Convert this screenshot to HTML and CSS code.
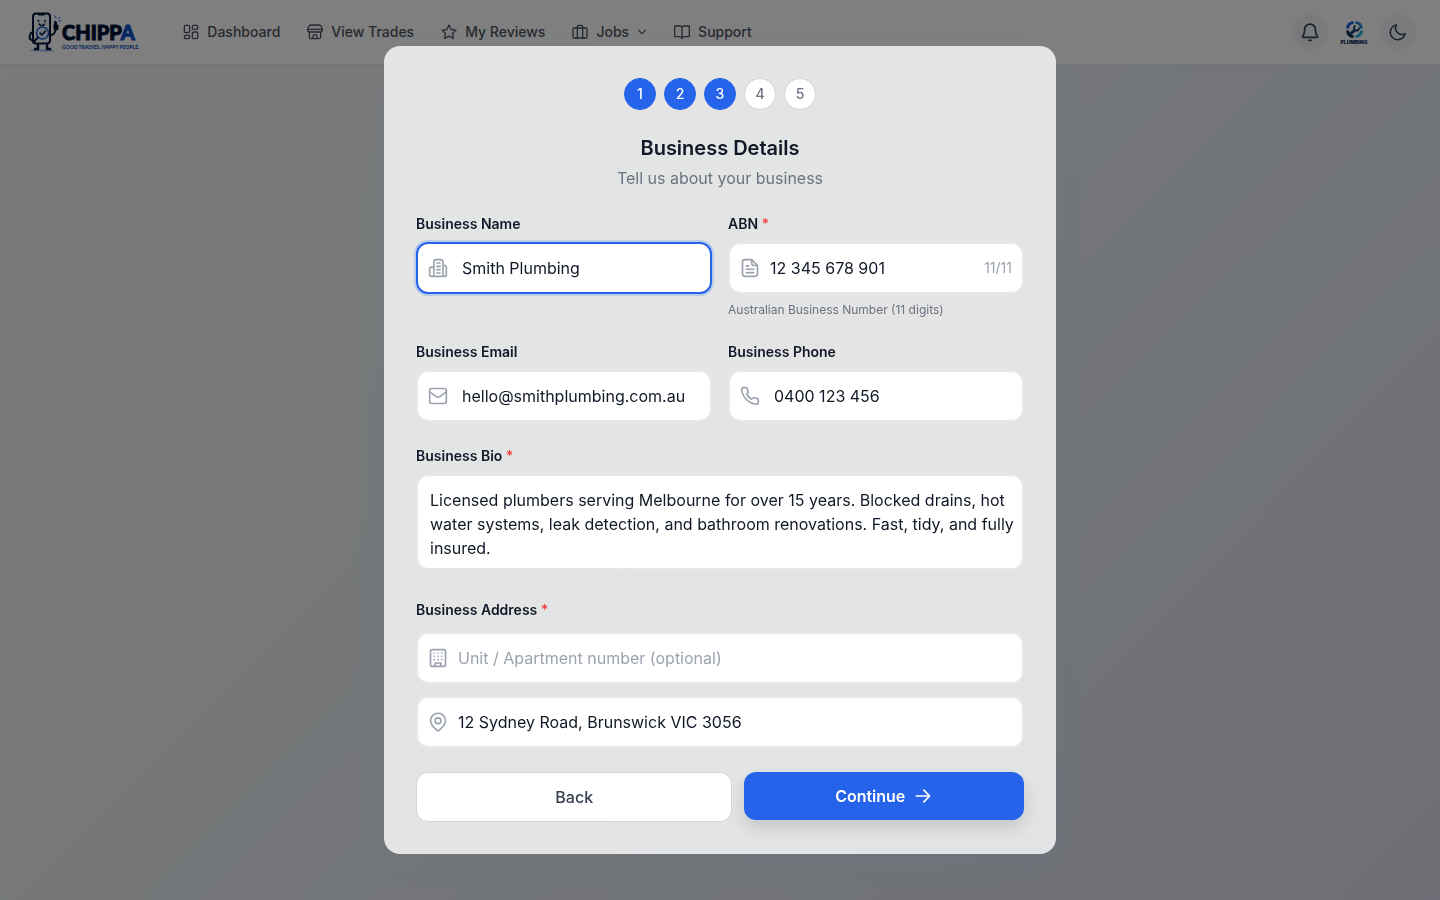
FILE: index.html
```
<!DOCTYPE html>
<html lang="en">
<head>
    <meta charset="UTF-8">
    <meta name="viewport" content="width=device-width, initial-scale=1.0">
    <title>Chippa - Business Details</title>
    <link rel="stylesheet" href="styles.css">
</head>
<body>
    <header class="header">
        <a href="#" class="logo">
            <svg class="mascot" viewBox="0 0 34 40" fill="none" stroke="#001436" stroke-width="2" stroke-linecap="round" stroke-linejoin="round">
                <ellipse cx="14" cy="38.500" rx="12" ry="1" fill="#8fbaf2" stroke="none"/>
                <path d="M10 33v4H7M19 33v4h3" stroke-width="2.500"/>
                <path d="M5 20c-3 1-4 4-3 7l3 2M23 23c3 0 4-2 5-6"/>
                <rect x="5" y="1.500" width="17" height="30" rx="3" fill="#f4f8ff"/>
                <path d="M11 2.500h5" stroke-width="2"/>
                <path d="M10.500 8.500v1M17 8.500v1M11 12c1.500 2 4 2 5.500 0" stroke-width="1.500"/>
                <path d="M26 17v-4l1-4 1.500 1v3h1.500v4z" fill="#001436" stroke-width="1"/>
                <path d="M28 6l-1-2M30.500 7l1.500-2M31 9.500l2-1" stroke="#1d64e8" stroke-width="1"/>
                <circle cx="14.500" cy="21" r="6" fill="#eaf3ff" stroke="#1d5fd6" stroke-width="1.500"/>
                <path d="M9.500 26l-4 4"/>
                <path d="M12 21l2 2 3.500-4" stroke-width="1.500"/>
            </svg>
            <span class="logo-text">
                <span class="logo-name">CHIPP<span class="logo-accent">A</span></span>
                <span class="logo-tagline">GOOD TRADIES. HAPPY PEOPLE.</span>
            </span>
        </a>

        <nav class="nav">
            <a href="#" class="nav-link">
                <svg class="icon-small" viewBox="0 0 24 24"><rect x="2" y="2" width="8" height="11" rx="2"/><rect x="14" y="2" width="8" height="6" rx="2"/><rect x="14" y="12" width="8" height="10" rx="2"/><rect x="2" y="17" width="8" height="5" rx="2"/></svg>
                Dashboard
            </a>
            <a href="#" class="nav-link">
                <svg class="icon-small" viewBox="0 0 24 24"><path d="M6 1.500h12a4 4 0 0 1 3.500 2.500L23 8v1a3 3 0 0 1-3 3H4a3 3 0 0 1-3-3V8l1.500-4A4 4 0 0 1 6 1.500zM1.500 8h21M3.500 12v8a2 2 0 0 0 2 2h13a2 2 0 0 0 2-2v-8M9 22v-3a3 3 0 0 1 6 0v3"/></svg>
                View Trades
            </a>
            <a href="#" class="nav-link">
                <svg class="icon-small" viewBox="0 0 24 24"><path d="M12 1.500l3.200 6.700 7.300 1-5.300 5.200 1.300 7.400-6.500-3.500-6.500 3.500 1.300-7.400L1.500 9.200l7.300-1z"/></svg>
                My Reviews
            </a>
            <a href="#" class="nav-link">
                <svg class="icon-small" viewBox="0 0 24 24"><rect x="1.500" y="6" width="21" height="15" rx="2"/><path d="M8 21V4a2 2 0 0 1 2-2h4a2 2 0 0 1 2 2v17"/></svg>
                Jobs
                <svg class="icon-chevron" viewBox="0 0 24 24"><path d="M4 8l8 8 8-8"/></svg>
            </a>
            <a href="#" class="nav-link">
                <svg class="icon-small" viewBox="0 0 24 24"><path d="M12 6v16M12 6c0-2-1.500-3-3.500-3H1v16h7c2 0 3.500 1 4 3 .5-2 2-3 4-3h7V3h-7.500C13.500 3 12 4 12 6z"/></svg>
                Support
            </a>
        </nav>

        <div class="actions">
            <button class="round-btn" aria-label="Notifications">
                <svg class="icon" viewBox="0 0 24 24"><path d="M4.500 18.500h15c1.500 0 2.200-1 1.200-2-1.500-1.600-2.200-3-2.200-6.500v-1a6.500 6.500 0 0 0-13 0v1c0 3.500-.7 4.900-2.200 6.500-1 1-.3 2 1.200 2zM10.500 22h3"/></svg>
            </button>
            <button class="round-btn avatar" aria-label="Profile">
                <svg class="avatar-icon" viewBox="0 0 20 20" fill="none">
                    <path d="M9 2.500A7.500 7.500 0 0 0 2.500 9" stroke="#1765d8" stroke-width="3"/>
                    <path d="M11 2.500A7.500 7.500 0 0 1 17.500 9" stroke="#2389d8" stroke-width="3"/>
                    <path d="M2.500 11A7.500 7.500 0 0 0 9 17.500" stroke="#0b2d5e" stroke-width="3"/>
                    <path d="M17.500 11a7.500 7.500 0 0 1-6.500 6.500" stroke="#24b4d8" stroke-width="3"/>
                    <path d="M5 15l5-4" stroke="#123a70" stroke-width="3"/>
                    <path d="M11 6c-2 1-2 4 0 5s4-1 4-3" stroke="#123a70" stroke-width="2"/>
                </svg>
                <span class="avatar-text">PLUMBING</span>
            </button>
            <button class="round-btn" aria-label="Dark mode">
                <svg class="icon icon-moon" viewBox="0 0 24 24"><path d="M21.500 14.100A8.500 8.500 0 0 1 9.900 2.500 10 10 0 1 0 21.500 14.100z"/></svg>
            </button>
        </div>
    </header>

    <div class="overlay">
        <form class="modal" role="dialog" aria-labelledby="title">
            <ol class="steps">
                <li class="step done">1</li>
                <li class="step done">2</li>
                <li class="step done">3</li>
                <li class="step">4</li>
                <li class="step">5</li>
            </ol>

            <h1 class="title" id="title">Business Details</h1>
            <p class="subtitle">Tell us about your business</p>

            <div class="fields">
                <div class="row">
                    <div class="group">
                        <label for="name">Business Name</label>
                        <div class="input-box active">
                            <svg class="icon" viewBox="0 0 24 24"><path d="M7 22V5a3 3 0 0 1 3-3h5a3 3 0 0 1 3 3v17M7 11H4a2 2 0 0 0-2 2v7a2 2 0 0 0 2 2h16a2 2 0 0 0 2-2v-9a2 2 0 0 0-2-2h-2M10.500 6h4M10.500 10h4M10.500 14h4M10.500 18h4"/></svg>
                            <input type="text" id="name" value="Smith Plumbing">
                        </div>
                    </div>
                    <div class="group">
                        <label for="abn">ABN <span class="required">*</span></label>
                        <div class="input-box near">
                            <svg class="icon" viewBox="0 0 24 24"><path d="M14 2H6a3 3 0 0 0-3 3v14a3 3 0 0 0 3 3h12a3 3 0 0 0 3-3V9zM14 2v4a3 3 0 0 0 3 3h4M7.500 9.500H10M7.500 13.500h9M7.500 17.500h9"/></svg>
                            <input type="text" id="abn" value="12 345 678 901">
                            <span class="counter">11/11</span>
                        </div>
                        <p class="hint">Australian Business Number (11 digits)</p>
                    </div>
                </div>

                <div class="row">
                    <div class="group">
                        <label for="email">Business Email</label>
                        <div class="input-box">
                            <svg class="icon" viewBox="0 0 24 24"><rect x="2" y="3" width="20" height="18" rx="2"/><path d="M2 7l7.500 5.500a4 4 0 0 0 5 0L22 7"/></svg>
                            <input type="email" id="email" value="hello@smithplumbing.com.au">
                        </div>
                    </div>
                    <div class="group">
                        <label for="phone">Business Phone</label>
                        <div class="input-box">
                            <svg class="icon" viewBox="0 0 24 24"><path d="M22 16.900v3a2 2 0 0 1-2.200 2A19.800 19.800 0 0 1 2 4.200 2 2 0 0 1 4 2h3a2 2 0 0 1 2 1.700c.1 1 .4 1.900.7 2.800a2 2 0 0 1-.5 2.100L8 9.900a16 16 0 0 0 6 6l1.300-1.200a2 2 0 0 1 2.100-.5c.9.300 1.800.6 2.800.7a2 2 0 0 1 1.800 2z"/></svg>
                            <input type="tel" id="phone" value="0400 123 456">
                        </div>
                    </div>
                </div>

                <div class="group">
                    <label for="bio">Business Bio <span class="required">*</span></label>
                    <textarea id="bio" rows="3">Licensed plumbers serving Melbourne for over 15 years. Blocked drains, hot water systems, leak detection, and bathroom renovations. Fast, tidy, and fully insured.</textarea>
                </div>

                <div class="group address">
                    <label for="address">Business Address <span class="required">*</span></label>
                    <div class="input-box near">
                        <svg class="icon" viewBox="0 0 24 24"><rect x="3" y="2" width="18" height="20" rx="2"/><path d="M8.500 22v-4h7v4M7.500 6h.01M12 6h.01M16.500 6h.01M7.500 10h.01M12 10h.01M16.500 10h.01M7.500 14h.01M12 14h.01M16.500 14h.01"/></svg>
                        <input type="text" id="unit" aria-label="Unit" placeholder="Unit / Apartment number (optional)">
                    </div>
                    <div class="input-box near">
                        <svg class="icon" viewBox="0 0 24 24"><path d="M21 10.500c0 5-6 10-8 11.700a1.500 1.500 0 0 1-2 0c-2-1.700-8-6.700-8-11.700a9 9 0 0 1 18 0z"/><circle cx="12" cy="10.500" r="3.500"/></svg>
                        <input type="text" id="address" value="12 Sydney Road, Brunswick VIC 3056">
                    </div>
                </div>
            </div>

            <div class="buttons">
                <button type="button" class="btn btn-back">Back</button>
                <button type="submit" class="btn btn-continue">
                    Continue
                    <svg class="icon" viewBox="0 0 24 24"><path d="M4 12h16M13 5l7 7-7 7"/></svg>
                </button>
            </div>
        </form>
    </div>
</body>
</html>
```
FILE: styles.css
```
* {
    box-sizing: border-box;
}

body {
    margin: 0;
    min-height: 100vh;
    font-family: Inter, sans-serif;
    font-size: 16px;
    line-height: 24px;
    color: #111827;
    background: linear-gradient(135deg, #f4f4f4 0%, #eef2f3 30%, #e2e7f0 70%, #dddeec 100%);
}

h1, p, ol {
    margin: 0;
    padding: 0;
}

input, textarea, button {
    font: inherit;
    color: inherit;
}

svg {
    flex-shrink: 0;
}

.icon, .icon-small, .icon-chevron {
    fill: none;
    stroke: currentColor;
    stroke-width: 2;
    stroke-linecap: round;
    stroke-linejoin: round;
}

.icon {
    width: 20px;
    height: 20px;
}

.icon-small {
    width: 16px;
    height: 16px;
}

.icon-chevron {
    width: 10px;
    height: 10px;
    stroke-width: 3;
}

.icon-moon {
    width: 18px;
    height: 18px;
}

/* Header */
.header {
    display: flex;
    align-items: center;
    height: 65px;
    padding: 0 24px 0 28px;
    background: #ffffff;
    border-bottom: 1px solid #e5e7eb;
}

.logo {
    display: flex;
    align-items: center;
    margin-right: 44px;
    text-decoration: none;
}

.mascot {
    width: 34px;
    height: 40px;
}

.logo-text {
    display: flex;
    flex-direction: column;
    padding-top: 6px;
    font-family: Lato, sans-serif;
    font-weight: 900;
    color: #001436;
}

.logo-name {
    font-size: 20px;
    line-height: 24px;
    -webkit-text-stroke: 1px currentColor;
}

.logo-accent {
    color: #0a50c8;
}

.logo-tagline {
    font-size: 5px;
    line-height: 6px;
    color: #1450b4;
}

.nav {
    display: flex;
    gap: 27px;
}

.nav-link {
    display: flex;
    align-items: center;
    gap: 8px;
    font-size: 14px;
    font-weight: 500;
    color: #4b5563;
    text-decoration: none;
}

.actions {
    display: flex;
    gap: 8px;
    margin-left: auto;
}

.round-btn {
    display: flex;
    align-items: center;
    justify-content: center;
    width: 36px;
    height: 36px;
    padding: 0;
    border: none;
    border-radius: 50%;
    background: #f3f4f6;
    color: #374151;
}

.avatar {
    flex-direction: column;
    background: #ffffff;
}

.avatar-icon {
    width: 19px;
    height: 19px;
}

.avatar-text {
    font-size: 5px;
    font-weight: 900;
    line-height: 6px;
    color: #0b2d5e;
}

/* Modal */
.overlay {
    position: fixed;
    inset: 0;
    display: flex;
    align-items: center;
    justify-content: center;
    background: rgba(0, 0, 0, 0.5);
}

.modal {
    width: 100%;
    max-width: 672px;
    padding: 32px;
    border-radius: 16px;
    background: linear-gradient(135deg, #e4e5e5 0%, #e3e5e4 35%, #e4e4e4 55%, #e1e3e5 100%);
    box-shadow: 0 8px 32px rgba(100, 120, 150, 0.15);
}

.steps {
    display: flex;
    justify-content: center;
    gap: 8px;
    margin-bottom: 24px;
    list-style: none;
}

.step {
    display: flex;
    align-items: center;
    justify-content: center;
    width: 32px;
    height: 32px;
    border: 1px solid #d1d5db;
    border-radius: 50%;
    background: #ffffff;
    color: #6b7280;
    font-size: 14px;
    font-weight: 500;
}

.step.done {
    border-color: #2563eb;
    background: #2563eb;
    color: #ffffff;
}

.title {
    margin-bottom: 4px;
    font-size: 20px;
    font-weight: 600;
    line-height: 28px;
    text-align: center;
}

.subtitle {
    margin-bottom: 24px;
    color: #6b7280;
    text-align: center;
}

.fields {
    display: flex;
    flex-direction: column;
    gap: 24px;
}

.row {
    display: grid;
    grid-template-columns: 1fr 1fr;
    gap: 16px;
}

.group {
    display: flex;
    flex-direction: column;
    gap: 8px;
    min-width: 0;
}

.group label {
    font-size: 14px;
    font-weight: 600;
    line-height: 20px;
}

.required {
    color: #ef4444;
}

.input-box {
    display: flex;
    align-items: center;
    gap: 14px;
    height: 52px;
    padding: 0 10px;
    border: 2px solid #e5e7eb;
    border-radius: 12px;
    background: #ffffff;
}

.input-box.near {
    gap: 10px;
}

.input-box.active {
    border-color: #2563eb;
    box-shadow: 0 0 0 2px rgba(37, 99, 235, 0.2);
}

.input-box .icon {
    color: #9ca3af;
}

.input-box input {
    flex: 1;
    width: 100%;
    min-width: 0;
    padding: 0;
    border: none;
    outline: none;
    background: transparent;
}

.input-box input::placeholder {
    color: #9ca3af;
}

.counter {
    font-size: 14px;
    line-height: 20px;
    color: #9ca3af;
}

.hint {
    font-size: 12px;
    line-height: 16px;
    color: #6b7280;
}

textarea {
    display: block;
    width: 100%;
    height: 96px;
    padding: 12px 4px 8px 12px;
    border: 2px solid #e5e7eb;
    border-radius: 12px;
    outline: none;
    overflow: hidden;
    background: #ffffff;
    resize: none;
}

.address {
    gap: 12px;
    padding-top: 6px;
}

.buttons {
    display: flex;
    align-items: flex-start;
    gap: 12px;
    margin-top: 24px;
}

.btn {
    display: flex;
    align-items: center;
    justify-content: center;
    gap: 8px;
    height: 50px;
    padding: 0;
    border: none;
    border-radius: 12px;
    cursor: pointer;
}

.btn-back {
    flex: 9;
    border: 1px solid #d1d5db;
    background: #ffffff;
    color: #374151;
    font-weight: 500;
}

.btn-continue {
    flex: 8;
    height: 48px;
    background: #2563eb;
    color: #ffffff;
    font-weight: 600;
    box-shadow: 0 8px 16px rgba(0, 0, 0, 0.12);
}
```
